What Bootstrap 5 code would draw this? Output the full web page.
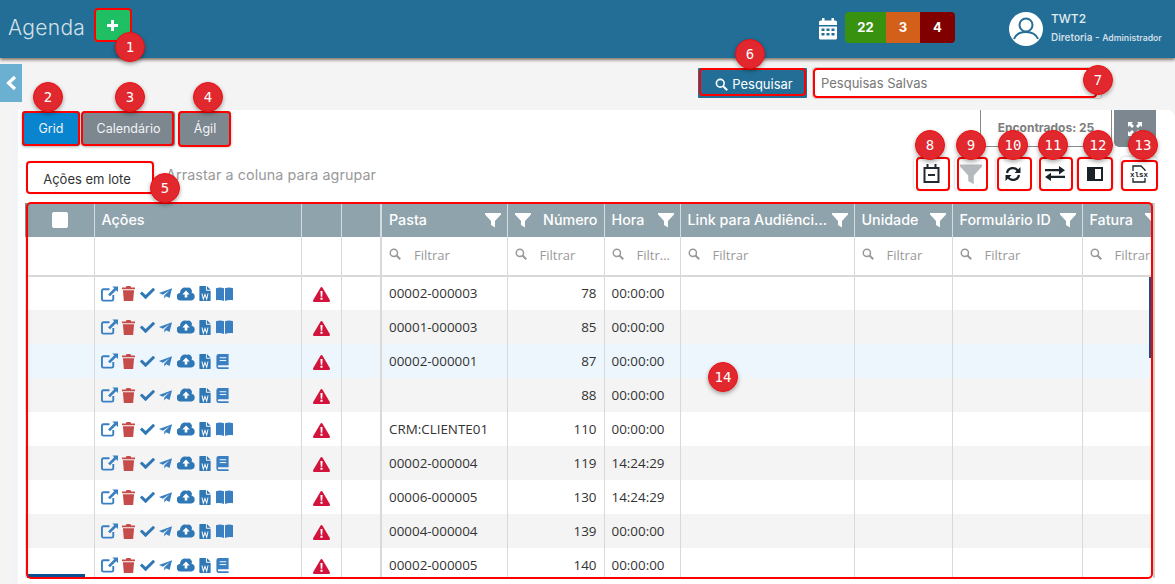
<!DOCTYPE html>
<html lang="pt-BR">
<head>
<meta charset="utf-8">
<title>Agenda</title>
<link href="https://cdn.jsdelivr.net/npm/bootstrap@5.3.0/dist/css/bootstrap.min.css" rel="stylesheet">
<style>
html,body{height:584px;overflow:hidden}
body{background:#f4f4f4;font-family:Inter,"Open Sans",sans-serif;position:relative;color:#333}
.topbar{height:58px;background:#226e96;box-shadow:0 2px 3px rgba(70,50,30,.65);padding:0 1px 0 8px;color:#fff}
.app-title{font-size:21px;font-weight:300;color:#d4e0e8;width:86px;letter-spacing:.3px;margin-top:-3px}
.add-btn{width:37px;height:33px;background:#1fc063;border-radius:3px;margin-top:-8px;font-size:0}
.cal-top{margin-right:8px}
.counts{height:31px;border-radius:4px;overflow:hidden;font-weight:700;font-size:13px;margin-right:54px;margin-top:-3px}
.counts>div{height:100%}
.cnt-g{width:41px;background:#38920f}
.cnt-o{width:34px;background:#d2601a}
.cnt-r{width:35px;background:#800000}
.who{width:123px;margin-left:8px;line-height:1;margin-top:-3px}
.who-name{font-size:12px;font-weight:500;color:#e2ecf2;margin-bottom:7px}
.who-role{font-size:10px;font-weight:600;color:#cfdde6;white-space:nowrap}
.who-role small{font-size:8.7px}
.searchbar{height:52px;padding-top:10px;padding-right:73px}
.side-toggle{width:22px;height:38px;background:#6bb0d1;margin-top:-4px}
.search-btn{width:109px;height:30px;background:#226e96;color:#fff;font-size:13px;border-radius:1px;margin-right:5px;padding:3px 0 0 3px!important}
.saved{width:290px;height:32px;margin-top:-1px;border:1px solid #cfcfcf;border-radius:3px;background:#fff;font-size:13px;color:#777;padding:2px 8px 0}
.sheet{background:#fff;margin-left:13px;border-left:5px solid #f1f3f6;height:474px;border-top-right-radius:8px;padding:0 18px 0 4px}
.tabrow{height:37px;padding-right:1px}
.tab-btn{height:35px;margin-top:1px;color:#f2f4f5;background:#7c8790;border-radius:3px;font-size:12.5px;padding-top:2px!important;box-shadow:0 1px 3px rgba(0,0,0,.3)}
.tab-grid{width:58px;background:#0984ce;margin-right:2px}
.tab-cal{width:93px;margin-right:4px}
.tab-agil{width:52px}
.found{width:132px;height:37px;border:1px solid #8a8a8a;border-top:0;font-size:12px;font-weight:700;color:#7e7e7e;margin-right:2px}
.expand{width:42px;height:37px;background:#7c8790;border-bottom-left-radius:5px;border-bottom-right-radius:5px}
.toolrow{height:56px;padding-top:10px;padding-left:5px}
.batch{width:127px;height:31px;margin-top:5px;font-size:13px;color:#333;background:#fff;box-shadow:0 0 3px rgba(0,0,0,.25);border-radius:3px;padding:5px 7px 0 0!important}
.draghint{font-size:14.3px;color:#999;margin-left:12px;margin-top:-11px;letter-spacing:.1px}
.tool{width:34px;height:33px;background:#fff;border-radius:4px;box-shadow:0 0 3px rgba(0,0,0,.28)}
.tool-b{width:31px;margin-left:7px}
.tool-c{margin-left:10px}
.tool-d{margin-left:8px}
.tool-e{width:36px;margin-left:5px}
.tool-f{width:36px;margin-left:8px}
.gridwrap{margin-left:3px;height:375px;overflow:hidden;border-right:2px solid #cfcfcf;position:relative;width:1130px}
table.agenda{table-layout:fixed;width:1142px;margin:0;border-collapse:collapse;font-family:"Open Sans",sans-serif;font-size:13.4px;color:#333}
table.agenda td,table.agenda th{padding:0 7px;border:0;border-right:1px solid #d9d9d9;white-space:nowrap;overflow:hidden;background:transparent;box-shadow:none;vertical-align:middle}
table.agenda thead tr.hd th{height:34px;background:#8fa3ac;color:#fff;font-family:Inter,sans-serif;font-weight:500;font-size:14.3px;border-right-color:#d5dbde;padding:0 6px 0 7px}
table.agenda thead tr.ft td{height:39px;background:#fff;border-bottom:2px solid #d9d9d9;font-size:13px;color:#999}
table.agenda tbody tr{height:34px;background:#fff}
table.agenda tbody tr.alt{background:#f4f4f4}
table.agenda tbody tr.over{background:#edf6fd}
table.agenda .sep{border-right:2px solid #d9d9d9}
table.agenda td.ac{padding-left:6px}
table.agenda td:first-child,table.agenda th:first-child{box-shadow:inset 7px 0 5px -5px rgba(0,0,0,.16)}
.ficons{gap:4.5px}
.chk{width:16px;height:16px;background:#fff;border-radius:2px;margin:auto}
.flt{gap:13px}
.thumb-r{position:absolute;left:1149px;top:277px;width:3px;height:81px;background:#14508d}
.thumb-b{position:absolute;left:27px;top:574px;width:58px;height:4px;background:#0b4f8e}
.box{position:absolute;border:2px solid #f00;border-radius:4px;pointer-events:none}
.pin{position:absolute;width:30px;height:30px;border-radius:50%;background:#e0282e;border:1px solid #f01010;color:#fff;font:14px "DejaVu Sans Mono",monospace;box-shadow:0 2px 4px rgba(0,0,0,.35);display:flex;align-items:center;justify-content:center}
.b1{left:94px;top:8px;width:38px;height:34px}
.b2{left:22px;top:111px;width:58px;height:35px}
.b3{left:81px;top:111px;width:93px;height:35px}
.b4{left:178px;top:111px;width:53px;height:36px}
.b5{left:26px;top:161px;width:128px;height:33px}
.b6{left:699px;top:68px;width:107px;height:28px}
.b7{left:813px;top:68px;width:284px;height:30px}
.b8{left:916px;top:157px;width:34px;height:34px}
.b9{left:957px;top:157px;width:31px;height:34px}
.b10{left:997px;top:157px;width:35px;height:34px}
.b11{left:1039px;top:157px;width:34px;height:34px}
.b12{left:1077px;top:157px;width:36px;height:34px}
.b13{left:1121px;top:160px;width:37px;height:31px}
.b14{left:26px;top:202px;width:1127px;height:377px;border-radius:5px}
.p1{left:115px;top:32px}.p2{left:33px;top:82px}.p3{left:115px;top:82px}.p4{left:193px;top:82px}
.p5{left:150px;top:173px}.p6{left:735px;top:39px}.p7{left:1083px;top:65px}.p8{left:915px;top:130px}
.p9{left:956px;top:130px}.p10{left:998px;top:130px}.p11{left:1038px;top:130px}.p12{left:1083px;top:130px}
.p13{left:1128px;top:130px}.p14{left:708px;top:362px}
</style>
</head>
<body>
<svg width="0" height="0" class="d-none">
<symbol id="i-funnel" viewBox="0 0 16 16"><path fill="currentColor" d="M0 1h16v1.6L10 9v6.5L6 13V9L0 2.6z"/></symbol>
<symbol id="i-search" viewBox="0 0 16 16"><circle cx="6.5" cy="6.5" r="4.8" fill="none" stroke="currentColor" stroke-width="2"/><path d="M10 10l5 5" stroke="currentColor" stroke-width="2.6"/></symbol>
<symbol id="i-edit" viewBox="0 0 18 16"><path fill="none" stroke="#3a7fc1" stroke-width="2" d="M9 3H2.500A1.500 1.500 0 0 0 1 4.500V13.500A1.500 1.500 0 0 0 2.500 15H11.500A1.500 1.500 0 0 0 13 13.500V9"/><path fill="#3a7fc1" d="M12 0h6v6l-2-2-6.500 6.500-2-2L14 2z"/></symbol>
<symbol id="i-trash" viewBox="0 0 14 16"><path fill="#c64b4b" d="M5 0h4l1 1.500h4V3.500H0V1.500h4zM1 4.500h12L12 16H2z"/></symbol>
<symbol id="i-check" viewBox="0 0 16 16"><path fill="#2f77b5" d="M5.400 13.700L.3 8.600c-.3-.3-.3-.8 0-1.100L1.500 6.300c.3-.3.800-.3 1.100 0L6 9.700l7.400-7.400c.3-.3.800-.3 1.100 0l1.200 1.200c.3.3.3.800 0 1.100L6.500 13.700c-.3.300-.8.300-1.100 0z"/></symbol>
<symbol id="i-plane" viewBox="0 0 16 16"><path fill="#3a7fc1" d="M16 1.500L13 13.500 8.800 11.400 6.500 14V10.500L13 4 4.700 9.600 0 7.500z"/></symbol>
<symbol id="i-cloud" viewBox="0 0 18 14"><path fill="#2f77b5" d="M14.500 5.800A3.600 3.600 0 0 0 10 .8 5 5 0 0 0 3.100 5.900 3.800 3.800 0 0 0 4 13.500h10.300a3.900 3.900 0 0 0 .2-7.700z"/><path fill="#fff" d="M9 3.600l3.700 3.800H10.300v3.200H7.700V7.400H5.300z"/></symbol>
<symbol id="i-word" viewBox="0 0 12 16"><path fill="#2f77b5" d="M0 .7A.7.7 0 0 1 .7 0H7v4.300c0 .4.300.7.700.7H12v10.300a.7.700 0 0 1-.7.700H.7a.7.700 0 0 1-.7-.7zM8 0l4 4H8z"/><path fill="none" stroke="#fff" stroke-width="1.100" d="M2.800 8l1.400 6 1.800-5 1.800 5 1.400-6"/></symbol>
<symbol id="i-open" viewBox="0 0 17 14"><path fill="#3a7fc1" d="M0 1.200C2.500.2 5.500.2 8 1.300V14C5.500 12.900 2.500 12.900 0 13.300zM17 1.200C14.500.2 11.500.2 9 1.300V14C11.500 12.900 14.500 12.900 17 13.300z"/></symbol>
<symbol id="i-book" viewBox="0 0 13 16"><path fill="#3a7fc1" d="M2.500 0H13v12H2.500A1 1 0 0 0 2.500 14H13v2H2.500A2.500 2.500 0 0 1 0 13.500V2.500A2.500 2.500 0 0 1 2.500 0z"/><path stroke="#fff" d="M3.500 4h7M3.500 7h7"/></symbol>
<symbol id="i-warn" viewBox="0 0 16 14"><path fill="#d2143c" d="M8 0c.4 0 .8.2 1 .6l6.800 11.600c.4.800-.1 1.800-1 1.800H1.200c-.9 0-1.400-1-1-1.800L7 .6C7.200.2 7.600 0 8 0z"/><path fill="#fff" d="M7 3.800h2L8.700 9H7.300zM7 10h2v2H7z"/></symbol>
</svg>

<header class="topbar d-flex align-items-center">
  <div class="app-title">Agenda</div>
  <button class="add-btn btn p-0 border-0 d-flex align-items-center justify-content-center" aria-label="Adicionar"><svg width="11" height="11" viewBox="0 0 11 11"><path fill="#fff" d="M4 0h3v4h4v3H7v4H4V7H0V4h4z"/></svg></button>
  <div class="ms-auto d-flex align-items-center">
    <svg class="cal-top" width="18" height="22" viewBox="0 0 18 22"><path fill="#fff" d="M3 0h2.500v2.500h7V0H15v2.500h1.500A1.500 1.500 0 0 1 18 4v3H0V4a1.500 1.500 0 0 1 1.500-1.500H3zM0 8.500h18V20a1.500 1.500 0 0 1-1.500 1.500h-15A1.500 1.500 0 0 1 0 20z"/><path fill="#226e96" d="M2.500 10.500h3V13h-3zM7.500 10.500h3V13h-3zM12.500 10.500h3V13h-3zM2.500 15h3v2.500h-3zM7.500 15h3v2.500h-3zM12.500 15h3v2.500h-3z"/></svg>
    <div class="counts d-flex text-center">
      <div class="cnt-g d-flex align-items-center justify-content-center">22</div>
      <div class="cnt-o d-flex align-items-center justify-content-center">3</div>
      <div class="cnt-r d-flex align-items-center justify-content-center">4</div>
    </div>
    <svg width="34" height="34" viewBox="0 0 34 34"><circle cx="17" cy="17" r="17" fill="#fff"/><circle cx="17" cy="13" r="6.500" fill="none" stroke="#226e96" stroke-width="2"/><path fill="none" stroke="#226e96" stroke-width="2" d="M5 27c2-5 6-7 12-7s10 2 12 7"/></svg>
    <div class="who"><div class="who-name">TWT2</div><div class="who-role">Diretoria - <small>Administrador</small></div></div>
  </div>
</header>

<div class="searchbar d-flex">
  <div class="side-toggle d-flex align-items-center justify-content-center"><svg width="12" height="16" viewBox="0 0 12 16"><path fill="none" stroke="#fff" stroke-width="3.200" d="M10 2L3.500 8l6.500 6"/></svg></div>
  <button class="search-btn btn border-0 ms-auto d-flex align-items-center justify-content-center gap-1"><svg width="13" height="13"><use href="#i-search" color="#fff"/></svg>Pesquisar</button>
  <div class="saved d-flex align-items-center">Pesquisas Salvas</div>
</div>

<main class="sheet">
  <div class="tabrow d-flex">
    <button class="tab-btn tab-grid btn p-0 border-0">Grid</button>
    <button class="tab-btn tab-cal btn p-0 border-0">Calendário</button>
    <button class="tab-btn tab-agil btn p-0 border-0">Ágil</button>
    <div class="found ms-auto d-flex align-items-center justify-content-center">Encontrados: 25</div>
    <div class="expand d-flex align-items-center justify-content-center"><svg width="14" height="14" viewBox="0 0 14 14"><path fill="#fff" d="M0 0h5L3.500 1.500 6 4 4 6 1.500 3.500 0 5zM14 0v5l-1.500-1.500L10 6 8 4l2.500-2.500L9 0zM0 14V9l1.500 1.500L4 8l2 2-2.500 2.500L5 14zM14 14H9l1.500-1.500L8 10l2-2 2.500 2.500L14 9z"/></svg></div>
  </div>
  <div class="toolrow d-flex align-items-start">
    <button class="batch btn border-0">Ações em lote</button>
    <div class="draghint align-self-center">Arrastar a coluna para agrupar</div>
    <div class="ms-auto d-flex">
      <div class="tool d-flex align-items-center justify-content-center"><svg width="17" height="19" viewBox="0 0 17 19"><path fill="none" stroke="#222b33" stroke-width="2" d="M1.500 4h14v14h-14z"/><path stroke="#222b33" stroke-width="2" d="M4.500 0v4M12.500 0v4M5 11h7"/></svg></div>
      <div class="tool tool-b d-flex align-items-center justify-content-center"><svg width="22" height="22" class="text-secondary opacity-50"><use href="#i-funnel"/></svg></div>
      <div class="tool tool-c d-flex align-items-center justify-content-center"><svg width="16" height="16" viewBox="0 0 16 16"><path fill="none" stroke="#1a2229" stroke-width="2.300" d="M2 7a6 6 0 0 1 11-2M14 9a6 6 0 0 1-11 2"/><path fill="#1a2229" d="M15.500 1v6h-6zM.5 15V9h6z"/></svg></div>
      <div class="tool tool-d d-flex align-items-center justify-content-center"><svg width="20" height="15" viewBox="0 0 20 15"><path fill="#1a2229" d="M0 3h14V0l6 4.200-6 4.200V5.300H0zM20 9.700H6V6.700L0 10.900l6 4.100V12H20z"/></svg></div>
      <div class="tool tool-e d-flex align-items-center justify-content-center"><svg width="16" height="16" viewBox="0 0 16 16"><path fill="#1a2229" d="M0 1h8v14H0z"/><path fill="none" stroke="#1a2229" stroke-width="2" d="M8 2h7v12H8"/></svg></div>
      <div class="tool tool-f d-flex align-items-center justify-content-center"><svg width="22" height="18" viewBox="0 0 22 18"><path fill="none" stroke="#1a2229" stroke-width="1.300" d="M5 6V1h8l4 4v1M5 13v4h12v-4"/><text x="11" y="12" text-anchor="middle" font-family="Liberation Mono,monospace" font-weight="700" font-size="7.500" fill="#1a2229">xlsx</text></svg></div>
    </div>
  </div>
  <div class="gridwrap">
    <table class="agenda table" id="agenda">
      <colgroup><col style="width:69px"><col style="width:207px"><col style="width:40px"><col style="width:40px"><col style="width:126px"><col style="width:97px"><col style="width:76px"><col style="width:174px"><col style="width:98px"><col style="width:130px"><col style="width:85px"></colgroup>
      <thead>
        <tr class="hd">
          <th><div class="chk"></div></th>
          <th>Ações</th><th></th><th class="sep"></th>
          <th><div class="d-flex justify-content-between align-items-center">Pasta<svg width="16" height="16"><use href="#i-funnel"/></svg></div></th>
          <th><div class="d-flex justify-content-between align-items-center"><svg width="16" height="16"><use href="#i-funnel"/></svg>Número</div></th>
          <th><div class="d-flex justify-content-between align-items-center">Hora<svg width="16" height="16"><use href="#i-funnel"/></svg></div></th>
          <th><div class="d-flex justify-content-between align-items-center"><span class="text-truncate">Link para Audiênci...</span><svg class="flex-shrink-0" width="16" height="16"><use href="#i-funnel"/></svg></div></th>
          <th><div class="d-flex justify-content-between align-items-center">Unidade<svg width="16" height="16"><use href="#i-funnel"/></svg></div></th>
          <th><div class="d-flex justify-content-between align-items-center">Formulário ID<svg width="16" height="16"><use href="#i-funnel"/></svg></div></th>
          <th><div class="d-flex justify-content-between align-items-center">Fatura<svg width="16" height="16"><use href="#i-funnel"/></svg></div></th>
        </tr>
        <tr class="ft">
          <td></td><td></td><td></td><td class="sep"></td>
          <td><div class="flt d-flex align-items-center"><svg width="12" height="12" class="mb-1"><use href="#i-search"/></svg>Filtrar</div></td>
          <td><div class="flt d-flex align-items-center"><svg width="12" height="12" class="mb-1"><use href="#i-search"/></svg>Filtrar</div></td>
          <td><div class="flt d-flex align-items-center"><svg class="flex-shrink-0 mb-1" width="12" height="12"><use href="#i-search"/></svg>Filtr...</div></td>
          <td><div class="flt d-flex align-items-center"><svg width="12" height="12" class="mb-1"><use href="#i-search"/></svg>Filtrar</div></td>
          <td><div class="flt d-flex align-items-center"><svg width="12" height="12" class="mb-1"><use href="#i-search"/></svg>Filtrar</div></td>
          <td><div class="flt d-flex align-items-center"><svg width="12" height="12" class="mb-1"><use href="#i-search"/></svg>Filtrar</div></td>
          <td><div class="flt d-flex align-items-center"><svg width="12" height="12" class="mb-1"><use href="#i-search"/></svg>Filtrar</div></td>
        </tr>
      </thead>
      <tbody id="rows"></tbody>
    </table>
  </div>
</main>

<div class="thumb-r"></div>
<div class="thumb-b"></div>

<div class="box b1"></div><div class="box b2"></div><div class="box b3"></div><div class="box b4"></div><div class="box b5"></div><div class="box b6"></div><div class="box b7"></div><div class="box b8"></div><div class="box b9"></div><div class="box b10"></div><div class="box b11"></div><div class="box b12"></div><div class="box b13"></div><div class="box b14"></div>
<div class="pin p1">1</div><div class="pin p2">2</div><div class="pin p3">3</div><div class="pin p4">4</div><div class="pin p5">5</div><div class="pin p6">6</div><div class="pin p7">7</div><div class="pin p8">8</div><div class="pin p9">9</div><div class="pin p10">10</div><div class="pin p11">11</div><div class="pin p12">12</div><div class="pin p13">13</div><div class="pin p14">14</div>

<script>
const data=[["00002-000003",78,"00:00:00","open",""],["00001-000003",85,"00:00:00","open","alt"],["00002-000001",87,"00:00:00","book","over"],["",88,"00:00:00","book","alt"],["CRM:CLIENTE01",110,"00:00:00","open",""],["00002-000004",119,"14:24:29","book","alt"],["00006-000005",130,"14:24:29","open",""],["00004-000004",139,"00:00:00","open","alt"],["00002-000005",140,"00:00:00","book",""]];
const ic=(n,w,h)=>`<svg width="${w}" height="${h}"><use href="#i-${n}"/></svg>`;
document.getElementById('rows').innerHTML=data.map(r=>`<tr class="${r[4]}"><td></td><td class="ac"><div class="ficons d-flex align-items-center">${ic('edit',17,16)}${ic('trash',13,15)}${ic('check',15,15)}${ic('plane',13,13)}${ic('cloud',18,14)}${ic('word',12,15)}${r[3]==='open'?ic('open',17,14):ic('book',13,15)}</div></td><td class="text-center">${ic('warn',17,15)}</td><td class="sep"></td><td>${r[0]}</td><td class="text-end">${r[1]}</td><td>${r[2]}</td><td></td><td></td><td></td><td></td></tr>`).join('');
</script>
<script src="https://cdn.jsdelivr.net/npm/bootstrap@5.3.0/dist/js/bootstrap.bundle.min.js"></script>
</body>
</html>
